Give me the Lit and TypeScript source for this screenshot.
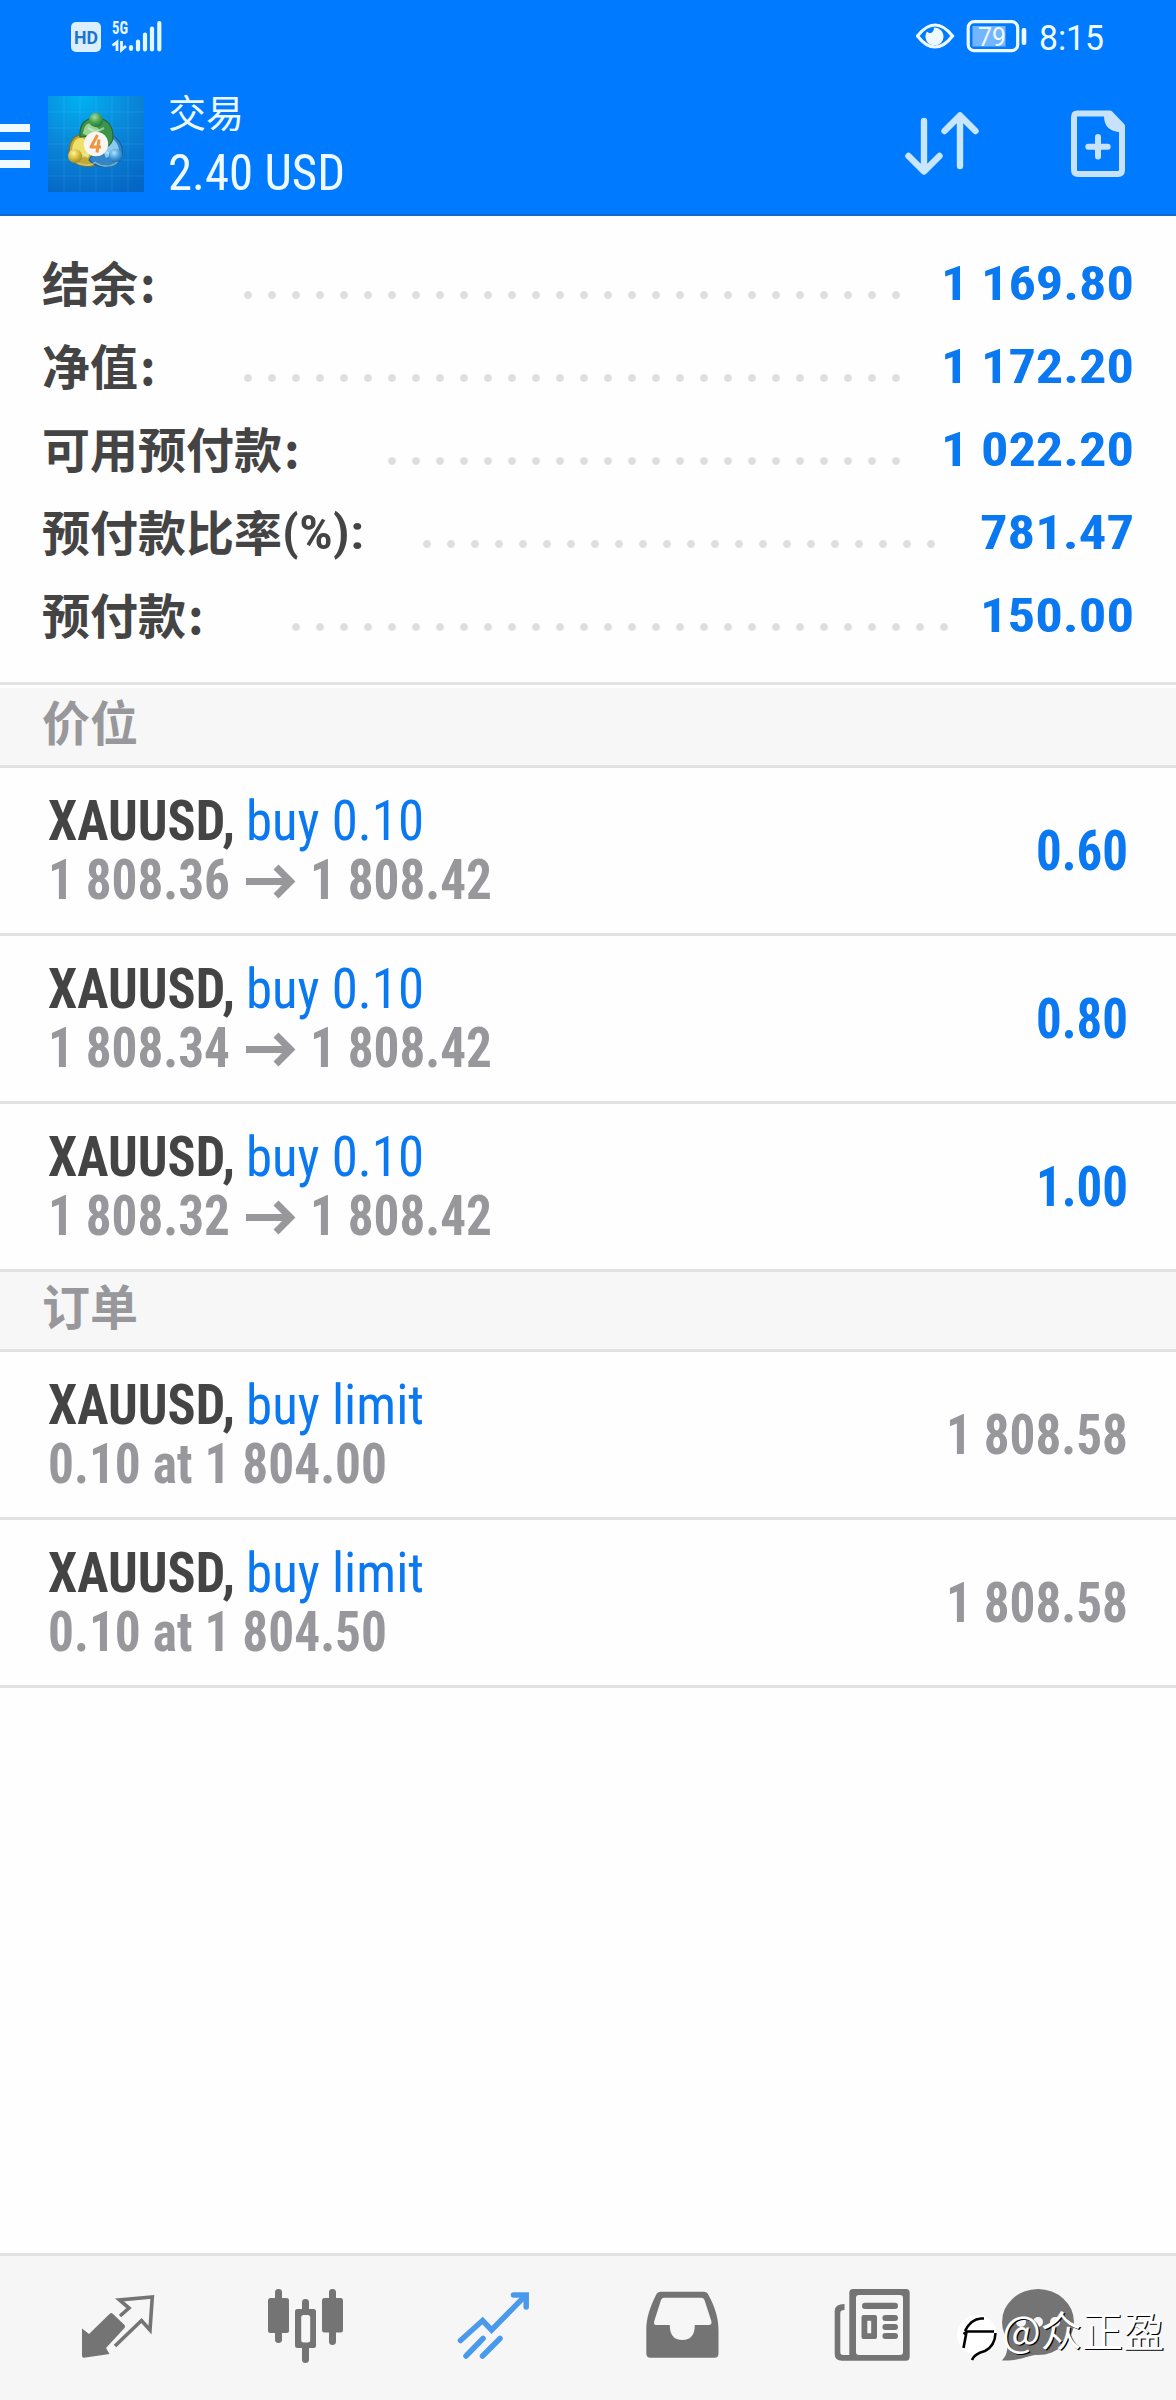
import { LitElement, html, css, svg } from "lit";
import { customElement } from "lit/decorators.js";

interface Metric { label: string; unit?: string; start: number; dots: number; value: string; valueWidth: number; }
interface Entry { action: string; detail: [string, number][]; arrow: boolean; value: string; valueWidth: number; muted?: boolean; }

const METRICS: Metric[] = [
  { label: "结余", start: 236, dots: 28, value: "1 169.80", valueWidth: 193 },
  { label: "净值", start: 236, dots: 28, value: "1 172.20", valueWidth: 193 },
  { label: "可用预付款", start: 380, dots: 22, value: "1 022.20", valueWidth: 193 },
  { label: "预付款比率", unit: "(%):", start: 415, dots: 22, value: "781.47", valueWidth: 154 },
  { label: "预付款", start: 284, dots: 28, value: "150.00", valueWidth: 154 },
];

const position = (open: string, value: string): Entry => ({
  action: "buy 0.10", detail: [[open, 182], ["1 808.42", 182]], arrow: true, value, valueWidth: 92,
});
const order = (detail: string): Entry => ({
  action: "buy limit", detail: [[detail, 339]], arrow: false, value: "1 808.58", valueWidth: 182, muted: true,
});
const POSITIONS = [position("1 808.36", "0.60"), position("1 808.34", "0.80"), position("1 808.32", "1.00")];
const ORDERS = [order("0.10 at 1 804.00"), order("0.10 at 1 804.50")];

/* One line of condensed text, set to an exact advance width. */
const line = (text: string, width: number, cls = "", baseline = 44, height = 59) => html`
  <svg class="line ${cls}" width=${width} height=${height}>
    <text x="0" y=${baseline} textLength=${width} lengthAdjust="spacingAndGlyphs">${text}</text>
  </svg>`;

const grid = [16, 32, 48, 64, 80];

@customElement("app-root")
export class AppRoot extends LitElement {
  static styles = css`
    :host { display: block; }
    * { box-sizing: border-box; }
    svg { display: block; flex: none; }
    .screen { width: 1176px; height: 2400px; background: #fefefe; display: flex; flex-direction: column; overflow: hidden;
      font-family: "Roboto Condensed", Roboto, "Noto Sans CJK SC", sans-serif; }
    .line { overflow: visible; font-size: 55px; fill: currentColor; }

    .header { height: 216px; background: #007aff; box-shadow: inset 0 -2px #1268d0; display: flex; flex-direction: column; color: #eefaff; }
    .status { height: 72px; padding: 0 72px 0 71px; display: flex; align-items: center; justify-content: space-between; }
    .status-group { display: flex; align-items: center; }
    .hd { font: 700 19px Roboto, sans-serif; fill: #1b75cf; }
    .gen { font: 700 18px "Roboto Condensed", sans-serif; fill: #e6f6ff; }
    .charge { font: 400 26px Roboto, sans-serif; fill: #eefaff; }
    .clock { font-family: Roboto, sans-serif; font-size: 35px; }
    .toolbar { height: 144px; display: flex; align-items: center; }
    .menu { width: 30px; height: 44px; display: flex; flex-direction: column; justify-content: space-between; margin-right: 18px; margin-top: 4px; }
    .menu-bar { height: 8px; background: #eefaff; }
    .titles { display: flex; flex-direction: column; margin-left: 24px; height: 144px; flex: 1; }
    .title { font: 400 38px/60px "Noto Sans CJK SC", sans-serif; height: 60px; margin-top: 9px; }
    .profit { font-size: 50.5px; font-weight: 450; }
    .tools { display: flex; gap: 84px; margin-right: 44px; }

    .summary { height: 466px; padding: 26px 42px 0; }
    .metric { height: 83px; display: flex; align-items: center; }
    .label { display: flex; color: #444; height: 83px; font: 700 48px/78px "Noto Sans CJK SC", sans-serif; }
    .colon { margin-left: 2px; }
    .unit { font-size: 49px; font-weight: 600; font-family: "Roboto Condensed", sans-serif; }
    .value { font-size: 48px; font-weight: 700; color: #0a78f0; }
    .dots { height: 83px; background: radial-gradient(circle at 12px 53px, #dedede 3.4px, transparent 4.4px) 0 0 / 24px 83px repeat-x; }

    .section { background: #f7f7f7; border-bottom: 3px solid #e3e3e4; height: 80px; padding-left: 42px; color: #98989c;
      font: 700 48px/64px "Noto Sans CJK SC", sans-serif; }
    .section.first { height: 86px; border-top: 3px solid #e3e3e4; box-shadow: inset 0 3px #fefefe; padding-top: 3px; }
    .entry { height: 168px; border-bottom: 3px solid #e3e3e4; padding: 28px 48px 0 48px; display: flex; justify-content: space-between; }
    .texts { display: flex; flex-direction: column; }
    .row { display: flex; }
    .symbol { color: #444; font-weight: 700; margin-right: 11px; }
    .action { color: #0a78f0; font-weight: 450; }
    .detail { color: #98989c; font-weight: 700; }
    .amount { color: #0a78f0; font-weight: 700; margin-top: 30px; }
    .amount.muted { color: #98989c; }
    .space { flex: 1; }

    .nav { height: 147px; background: #f6f6f6; border-top: 3px solid #e3e3e4; display: grid; align-items: center; justify-items: center;
      grid-template-columns: repeat(5, 188px) 148px; padding: 0 24px; position: relative; }
    .mark { position: absolute; left: 950px; top: 24px; }
    .mark-text { font: 400 42px "Noto Sans CJK SC", sans-serif; }
  `;

  metric(m: Metric) {
    return html`
      <div class="metric">
        <div class="label" style="width:${m.start - 42}px">${m.label}${m.unit ? line(m.unit, 82, "unit", 58, 83) : html`<span class="colon">:</span>`}</div>
        <div class="dots" style="width:${m.dots * 24}px"></div>
        <div class="space"></div>
        ${line(m.value, m.valueWidth, "value", 58, 83)}
      </div>`;
  }

  entry(e: Entry) {
    return html`
      <div class="entry">
        <div class="texts">
          <div class="row">${line("XAUUSD,", 187, "symbol")}${line(e.action, 178, "action")}</div>
          <div class="row">
            ${line(e.detail[0][0], e.detail[0][1], "detail")}
            ${e.arrow ? html`
              <svg width="80" height="59" viewBox="0 0 80 59" fill="none" stroke="#98989c" stroke-width="7">
                <path d="M16 26.500H61M46 12L60.500 26.500L46 41" />
              </svg>
              ${line(e.detail[1][0], e.detail[1][1], "detail")}` : ""}
          </div>
        </div>
        ${line(e.value, e.valueWidth, e.muted ? "amount muted" : "amount")}
      </div>`;
  }

  appIcon() {
    return html`
      <svg width="96" height="96" viewBox="0 0 96 96">
        <defs>
          <radialGradient id="sky" cx="35%" cy="0%" r="110%"><stop offset="0" stop-color="#00b2f2" /><stop offset=".5" stop-color="#0a86d8" /><stop offset="1" stop-color="#0565c4" /></radialGradient>
          <radialGradient id="green" cx="40%" cy="30%" r="75%"><stop offset="0" stop-color="#a5db9e" /><stop offset=".5" stop-color="#4aa552" /><stop offset="1" stop-color="#1f6f3a" /></radialGradient>
          <radialGradient id="gold" cx="40%" cy="30%" r="75%"><stop offset="0" stop-color="#fff3a0" /><stop offset=".5" stop-color="#d9bf3c" /><stop offset="1" stop-color="#9c8420" /></radialGradient>
          <radialGradient id="blue" cx="40%" cy="30%" r="75%"><stop offset="0" stop-color="#b5e2fb" /><stop offset=".5" stop-color="#4aa3de" /><stop offset="1" stop-color="#1a68ac" /></radialGradient>
        </defs>
        <rect width="96" height="96" fill="url(#sky)" />
        <g stroke="#6cd0f5" stroke-opacity=".17" stroke-width="1">
          ${grid.map((p) => svg`<path d="M${p} 0V96M0 ${p}H96" />`)}
        </g>
        <g stroke-linejoin="round" stroke-width="1.200">
          <path d="M21 58C21 44 27 38 36 39L48 50L54 66C44 74 24 71 21 58Z" fill="#c2a935" stroke="#77722f" />
          <path d="M24 54C25 45 29 41 35 42L44 52L40 62Z" fill="#efe06a" stroke="none" />
          <path d="M74 60C76 50 70 41 62 39L50 50L41 64C50 74 70 73 74 60Z" fill="#3286c8" stroke="#1b5f9e" />
          <path d="M71 54C70 48 67 43 62 42L54 52L58 62Z" fill="#8ccbf0" stroke="none" />
          <path d="M32 41C31 27 38 22 48 22S65 29 65 40C65 45 63 49 58 51L46 40Z" fill="#3c944a" stroke="#23663a" />
          <path d="M35 38C36 28 41 26 45 28L52 34L42 40Z" fill="#9cd492" stroke="none" />
          <path d="M40 32L48 36L56 32M34 61L40 57M64 59L58 56" fill="none" stroke="#d5eedb" stroke-opacity=".6" stroke-width="2" />
          <path d="M27 66C35 70 43 70 48 66M48 67C55 72 66 71 70 65" fill="none" stroke="#f1f4c4" stroke-opacity=".45" stroke-width="1.500" />
        </g>
        <circle cx="48" cy="24" r="7.200" fill="url(#green)" />
        <circle cx="27" cy="60" r="7" fill="url(#gold)" />
        <circle cx="67.500" cy="59.500" r="6.800" fill="url(#blue)" />
        <circle cx="48" cy="48" r="12.200" fill="#f8f6f2" />
        <path d="M49.500 39L43 51H53M51 43.500L49 56.500" fill="none" stroke="#ef9440" stroke-width="3" stroke-linejoin="round" />
      </svg>`;
  }

  render() {
    return html`
      <div class="screen">
        <div class="header">
          <div class="status">
            <svg width="94" height="36" viewBox="71 18 94 36">
              <rect x="71" y="22" width="30" height="30" rx="5" fill="#dcefff" />
              <text class="hd" x="74" y="44" textLength="24" lengthAdjust="spacingAndGlyphs">HD</text>
              <text class="gen" x="112" y="34" textLength="16" lengthAdjust="spacingAndGlyphs">5G</text>
              <path d="M112.500 45.500L117 42V51M121.500 41V50L126 46" fill="none" stroke="#e6f6ff" stroke-width="2.800" />
              <path d="M131 47v2M138 41.500v8M145 34.500v15M152 28.500v21M159.300 23v26.500" stroke="#e6f6ff" stroke-width="4.200" stroke-linecap="round" />
            </svg>
            <div class="status-group">
              <svg width="123" height="36" viewBox="917 18 123 36">
                <path d="M918.500 36C925 27.500 930 25 936 25S947 27.500 953.500 36C947 44.500 942 47 936 47S925 44.500 918.500 36Z" fill="none" stroke="#eefaff" stroke-width="3.200" />
                <path d="M928 31.500C931 34.500 935 33 935 27.500A9 9 0 1 1 928 31.500Z" fill="#eefaff" />
                <rect x="969.200" y="21.700" width="49.500" height="29" rx="6" fill="none" stroke="#eefaff" stroke-width="3.200" />
                <rect x="973.500" y="26" width="33" height="20.500" fill="#fff" fill-opacity=".45" />
                <text class="charge" x="979" y="45.500" textLength="28" lengthAdjust="spacingAndGlyphs">79</text>
                <rect x="1022.700" y="28" width="4.600" height="17" rx="2" fill="#eefaff" />
              </svg>
              ${line("8:15", 65, "clock", 32, 36)}
            </div>
          </div>
          <div class="toolbar">
            <div class="menu"><div class="menu-bar"></div><div class="menu-bar"></div><div class="menu-bar"></div></div>
            ${this.appIcon()}
            <div class="titles">
              <div class="title">交易</div>
              ${line("2.40 USD", 177, "profit", 49, 60)}
            </div>
            <div class="tools">
              <svg width="80" height="72" viewBox="902 108 80 72" fill="none" stroke="#c8e6ff" stroke-width="6.400" stroke-linecap="round" stroke-linejoin="round">
                <path d="M924 121V171M908.500 156L924 171.500L939.500 156M960 166V116M944.500 131L960 115.500L975.500 131" />
              </svg>
              <svg width="66" height="72" viewBox="1066 108 66 72">
                <path d="M1077 113.500H1110L1122 126V170Q1122 174 1118 174H1078Q1074 174 1074 170V117.500Q1074 113.500 1077 113.500Z" fill="none" stroke="#c8e2fb" stroke-width="6" stroke-linejoin="round" />
                <path d="M1104 112H1110L1125 126V132H1118Q1104 130 1104 116Z" fill="#c8e2fb" />
                <path d="M1098 137V156.500M1088.300 146.800H1107.700" stroke="#c8e2fb" stroke-width="6" stroke-linecap="round" />
              </svg>
            </div>
          </div>
        </div>

        <div class="summary">${METRICS.map((m) => this.metric(m))}</div>
        <div class="section first">价位</div>
        ${POSITIONS.map((e) => this.entry(e))}
        <div class="section">订单</div>
        ${ORDERS.map((e) => this.entry(e))}
        <div class="space"></div>

        <div class="nav">
          <svg width="90" height="96" viewBox="73 2280 90 96">
            <path d="M82 2328.500L89 2334L109.500 2314Q111.300 2312 113 2314L124.500 2325Q125.600 2326.500 124.500 2328L106 2348L109.500 2354L84 2357.800Q82 2357.800 82 2355.500Z" fill="#747474" />
            <path d="M120 2316L129 2308L119.500 2300L152.300 2297L150 2330L141.500 2320.500L115 2346" fill="none" stroke="#747474" stroke-width="3.600" />
          </svg>
          <svg width="90" height="96" viewBox="261 2280 90 96" fill="#747474">
            <rect x="268" y="2298" width="21" height="35" rx="2.500" /><rect x="275" y="2289" width="7" height="54" rx="3.400" />
            <rect x="322" y="2298" width="21" height="34.500" rx="2.500" /><rect x="329" y="2289" width="7" height="56" rx="3.400" />
            <rect x="302" y="2299" width="7" height="64" rx="3.400" /><rect x="295" y="2309" width="21" height="39" rx="2.500" />
            <rect x="301.200" y="2315" width="9" height="27.500" rx="2.500" fill="#f6f6f6" />
          </svg>
          <svg width="90" height="96" viewBox="449 2280 90 96" fill="none" stroke="#4a9aec" stroke-width="5.500" stroke-linecap="round">
            <path d="M460.500 2340.500L482.600 2320.500L491.600 2330L525 2296M466 2356L483 2338.500M482.500 2356L500 2338.500" />
            <path d="M513.500 2295H526.200V2307" stroke-linejoin="miter" />
          </svg>
          <svg width="90" height="96" viewBox="637 2280 90 96">
            <path fill-rule="evenodd" fill="#747474" d="M661 2291.700H703.500Q707 2291.700 708.500 2295C715 2307 718.500 2318 718.500 2330V2353.500Q718.500 2357.700 714.500 2357.700H650.500Q646.300 2357.700 646.300 2353.500V2330C646.300 2318 650 2307 656 2295Q657.500 2291.700 661 2291.700ZM664 2297.800Q662 2297.800 661 2300L654.300 2321Q653.300 2325 656 2325H669.800Q669.800 2340 682.300 2340T694.800 2325H708.500Q712.300 2325 711.300 2321L704.500 2300Q703.500 2297.800 701.500 2297.800Z" />
          </svg>
          <svg width="90" height="96" viewBox="825 2280 90 96" fill="#747474">
            <path fill-rule="evenodd" d="M853 2289H906Q909.700 2289 909.700 2293V2356.500Q909.700 2360.700 906 2360.700H842Q834.700 2360.700 834.700 2354V2311Q834.700 2304 844.500 2304V2310Q840.300 2310 840.300 2313V2352Q840.300 2355 843 2355H849.300V2293Q849.300 2289 853 2289ZM859 2295Q856 2295 856 2298V2352Q856 2355 859 2355H900Q903 2355 903 2352V2298Q903 2295 900 2295Z" />
            <rect x="862" y="2302.700" width="36" height="6.300" rx="3" />
            <path fill-rule="evenodd" d="M863.500 2315H875Q877 2315 877 2317V2337Q877 2339 875 2339H863.500Q861.500 2339 861.500 2337V2317Q861.500 2315 863.500 2315ZM867.300 2320.700V2333.300H871.200V2320.700Z" />
            <rect x="882.400" y="2315" width="15.600" height="6" rx="3" /><rect x="882.400" y="2324" width="15.600" height="6" rx="3" /><rect x="882.400" y="2333" width="15.600" height="6" rx="3" />
          </svg>
          <svg width="90" height="96" viewBox="993 2280 90 96" fill="#747474">
            <ellipse cx="1038" cy="2322" rx="36" ry="33" />
            <path d="M1002 2360.500C1007 2355 1008 2350 1007 2340L1036 2355C1026 2356 1020 2361 1002 2360.500Z" />
            <g fill="#f6f6f6"><circle cx="1021" cy="2322" r="5" /><circle cx="1038" cy="2322" r="5" /><circle cx="1055" cy="2322" r="5" /></g>
          </svg>
          <svg class="mark" width="226" height="96" viewBox="950 2280 226 96">
            <circle cx="977" cy="2335" r="20" fill="#fff" />
            <g fill="none" stroke="#000" stroke-width="2.600">
              <path d="M965 2331Q971 2319 981 2318.500H984M963.500 2334L967 2331.500H994M966.500 2332L963.500 2348M995.500 2333Q995 2346 985 2351Q974 2354 972 2360" />
            </g>
            <g class="mark-text">
              <text x="1003.200" y="2348.200" textLength="162" lengthAdjust="spacingAndGlyphs" fill="#000">@众正盈</text>
              <text x="1002" y="2347" textLength="162" lengthAdjust="spacingAndGlyphs" fill="#fff">@众正盈</text>
            </g>
          </svg>
        </div>
      </div>`;
  }
}
